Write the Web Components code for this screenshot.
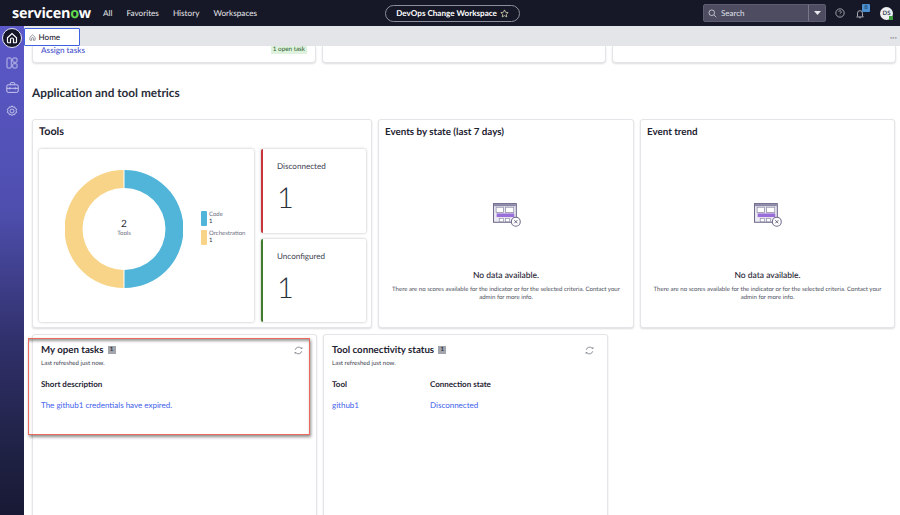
<!DOCTYPE html>
<html><head><meta charset="utf-8">
<style>
html,body{margin:0;padding:0;height:100%;overflow:hidden;background:#fff;font-family:Lato,"Open Sans",sans-serif;text-rendering:geometricPrecision;}
sn-app{display:block;width:900px;height:515px;}
</style></head>
<body>
<sn-app></sn-app>
<script>
function def(name,css,html){
  customElements.define(name,class extends HTMLElement{
    constructor(){super();this.attachShadow({mode:'open'}).innerHTML='<style>'+css+'</style>'+html;}
  });
}
def('sn-card',`:host{display:block;position:relative;box-sizing:border-box;background:#fff;border:1px solid #e4e5e8;border-radius:3px;box-shadow:0 1px 2px rgba(0,0,0,.14);min-width:0}`,`<slot></slot>`);

def('sn-topbar',`
:host{display:flex;align-items:center;height:26px;flex:none;background:#171827;color:#fff;position:relative;z-index:2}
.logo{font:700 14.4px "Open Sans",sans-serif;letter-spacing:-.25px;margin-left:12px;width:83px;color:#fff;white-space:nowrap}
.logo b{color:#62d84e;font-weight:700}
nav{display:flex;gap:14px;margin-left:8px;font-size:8.2px;color:#e6e7ec}
.pill{margin-left:128px;width:135px;height:17px;border:1px solid #8c8e99;border-radius:9px;display:flex;align-items:center;justify-content:center;gap:3px;font-weight:700;font-size:8.1px;white-space:nowrap;box-sizing:border-box}
.right{margin-left:auto;display:flex;align-items:center}
.search{width:123px;height:18px;background:#4d4c61;border:1px solid #5d5c70;border-radius:2px;display:flex;align-items:center;color:#dfe0e6;font-size:8px;box-sizing:border-box;padding-left:4px;gap:4px;margin-right:9px}
.search span{flex:1}
.drop{width:16px;height:100%;border-left:1px solid #77778a;display:flex;align-items:center;justify-content:center}
.ico{width:10px;height:10px;display:block}
.bell{position:relative;margin-left:8px;width:14px;height:14px}
.badge{position:absolute;left:9px;top:-2px;width:8px;height:8px;background:#4b8fd0;color:#173a5c;font-size:6px;line-height:8px;text-align:center;border-radius:1px}
.av{width:13px;height:13px;border-radius:50%;background:#eef0f2;color:#3a3f52;font-size:6px;font-weight:700;display:flex;align-items:center;justify-content:center;margin:0 7px 0 13px;position:relative}
.av i{position:absolute;right:0;bottom:0;width:4px;height:4px;background:#3d9a3d}
`,`
<div class="logo">servicen<b>o</b>w</div>
<nav><span>All</span><span>Favorites</span><span>History</span><span>Workspaces</span></nav>
<div class="pill"><span>DevOps Change Workspace</span>
<svg width="9" height="9" viewBox="0 0 24 24" fill="none" stroke="#e0dcc0" stroke-width="2"><path d="M12 2.5l2.9 6.3 6.9.8-5.1 4.7 1.4 6.8-6.1-3.4-6.1 3.4 1.4-6.8L2.2 9.6l6.9-.8z"/></svg></div>
<div class="right">
<div class="search"><svg width="9" height="9" viewBox="0 0 24 24" fill="none" stroke="#dfe0e6" stroke-width="2"><circle cx="10" cy="10" r="7.5"/><path d="M16 16l6 6"/></svg><span>Search</span><div class="drop"><svg width="7" height="4" viewBox="0 0 7 4"><path d="M0 0h7L3.5 4z" fill="#e8e8ee"/></svg></div></div>
<svg class="ico" viewBox="0 0 24 24" fill="none" stroke="#b8b9c2" stroke-width="2"><circle cx="12" cy="12" r="10"/><path d="M9 9.500a3 3 0 1 1 4.500 2.600c-1 .6-1.500 1.200-1.500 2.400M12 17v1"/></svg>
<div class="bell"><svg width="10" height="10" viewBox="0 0 24 24" fill="none" stroke="#b8b9c2" stroke-width="2.2" style="position:absolute;left:2px;top:3px"><path d="M6 17V10a6 6 0 0 1 12 0v7l2 2H4zM10 21h4"/></svg><div class="badge">8</div></div>
<div class="av">DS<i></i></div>
</div>`);

def('sn-sidebar',`
:host{display:flex;flex-direction:column;align-items:center;width:24px;flex:none;background:linear-gradient(#5b58c8 0,#4e4eae 35%,#30306b 60%,#202245 80%,#13142a 100%);}
.home{width:20px;height:20px;border-radius:50%;background:#15162a;border:1px solid #e8e8f4;box-sizing:border-box;display:flex;align-items:center;justify-content:center;margin-top:2px;flex:none}
svg{display:block;flex:none}
`,`
<div class="home"><svg width="12" height="12" viewBox="0 0 24 24" fill="none" stroke="#fff" stroke-width="2.4"><path d="M3 11.500L12 3l9 8.500V20a1.500 1.500 0 0 1-1.500 1.500H15V15a3 3 0 0 0-6 0v6.500H4.500A1.500 1.500 0 0 1 3 20z"/></svg></div>
<svg style="margin-top:8.5px" width="12" height="12" viewBox="0 0 24 24" fill="none" stroke="#c9c9ee" stroke-width="1.8"><rect x="2" y="2" width="8.5" height="20" rx="1.5"/><rect x="13.5" y="2" width="8.5" height="8.5" rx="1.5"/><rect x="13.5" y="13.5" width="8.5" height="8.5" rx="1.5"/></svg>
<svg style="margin-top:12.5px" width="13" height="13" viewBox="0 0 24 24" fill="none" stroke="#c9c9ee" stroke-width="1.8"><rect x="1.5" y="7" width="21" height="14" rx="2.5"/><path d="M8 7V4.500A1.500 1.500 0 0 1 9.500 3h5A1.500 1.500 0 0 1 16 4.500V7M1.500 13.500h21M7 11.500v4M17 11.500v4"/></svg>
<svg style="margin-top:11px" width="12" height="12" viewBox="0 0 24 24" fill="none" stroke="#c9c9ee" stroke-width="1.8"><circle cx="12" cy="12" r="4"/><path d="M12 1.500l2 3 3.400-.9.900 3.400 3.200 1.300-1.500 3.200 1.500 3.200-3.200 1.300-.9 3.400-3.400-.9-2 3-2-3-3.400.9-.9-3.400-3.200-1.300L3.900 11.500 2.400 8.300l3.200-1.300.9-3.400 3.500.9z"/></svg>
`);

def('sn-tabs',`
:host{display:flex;align-items:flex-end;height:20px;background:#e3e5e8;flex:none;position:relative}
.tab{width:56px;height:18px;background:#fff;border:1px solid #3f63e0;border-radius:1px;box-sizing:border-box;display:flex;align-items:center;gap:2.5px;padding-left:4px;font-size:8.1px;color:#1f2433;white-space:nowrap;font-weight:500}
.more{margin:0 3px 5px auto;color:#6a6e7a;font-size:3.5px;line-height:6px;letter-spacing:.3px}
`,`<div class="tab"><svg width="7" height="7" viewBox="0 0 24 24" fill="none" stroke="#5a5e6b" stroke-width="2.2"><path d="M3 11.500L12 3l9 8.500V20a1.500 1.500 0 0 1-1.500 1.500H15V15a3 3 0 0 0-6 0v6.500H4.500A1.500 1.500 0 0 1 3 20z"/></svg><span>Home</span></div><div class="more">•••</div>`);

def('sn-donut',`
:host{display:flex;align-items:flex-start;box-sizing:border-box;background:#fff;border-radius:2px;box-shadow:0 0 3px rgba(0,0,0,.28);padding:21px 0 0 26px;min-width:0}
.ring{position:relative;width:118px;height:118px;flex:none}
.ring svg{display:block}
.c{position:absolute;inset:0 0 3px 0;display:flex;flex-direction:column;align-items:center;justify-content:center;color:#1f2433;font-size:10px;line-height:12px}
.c small{font-size:6px;color:#6c7080;line-height:7.2px}
.leg{margin:40.5px 0 0 18px;font-size:6px;line-height:7.5px;color:#6c7080;display:flex;flex-direction:column;gap:4px}
.li{display:flex;gap:2px;align-items:center}
.sw{width:6px;height:15px;border-radius:1px}
b{display:block;font-weight:400;color:#2a2e3b}
`,`<div class="ring"><svg width="118" height="118" viewBox="0 0 118 118"><path d="M59.500 0a59 59 0 0 1 0 118v-18a41 41 0 0 0 0-82z" fill="#50b5d8"/><path d="M58.500 0a59 59 0 0 0 0 118v-18a41 41 0 0 1 0-82z" fill="#f8d488"/></svg><div class="c"><span>2</span><small>Tools</small></div></div>
<div class="leg"><div class="li"><div class="sw" style="background:#50b5d8"></div><div>Code<b>1</b></div></div><div class="li"><div class="sw" style="background:#f8d488"></div><div>Orchestration<b>1</b></div></div></div>`);

def('sn-stat',`
:host{display:block;box-sizing:border-box;background:#fff;border-radius:2px;box-shadow:0 0 3px rgba(0,0,0,.28);border-left:2px solid var(--c);padding:10px 0 0 14px;min-height:0}
.l{font-size:8.1px;line-height:14px;color:#3d4150}
.n{font-size:29px;font-weight:300;line-height:30px;margin-top:10px;color:#2a2e3b}
`,`<div class="l"><slot name="l"></slot></div><div class="n"><slot name="n"></slot></div>`);

def('sn-nodata',`
:host{display:flex;flex-direction:column;align-items:center;text-align:center;padding-top:83px}
svg{display:block}
h4{margin:42px 0 0;font-size:8.5px;line-height:12px;font-weight:500;color:#1f2433}
p{margin:5px 6px 0;font-size:6.05px;line-height:8px;color:#4d5160}
`,`<svg width="28" height="24" viewBox="0 0 27 23" style="margin-left:1px"><rect x=".5" y=".5" width="22" height="18" fill="#eceaf2" stroke="#6d6a8a"/><path d="M1 1h21v2H1z" fill="#8a86a8"/><rect x="3" y="4" width="7" height="5" fill="#fff" stroke="#8a87a3" stroke-width=".7"/><rect x="12" y="4" width="8" height="5" fill="#fff" stroke="#8a87a3" stroke-width=".7"/><rect x="3.5" y="10" width="17" height="3.5" fill="#9a6ed8"/><rect x="6" y="15" width="4" height="3" fill="#fff" stroke="#8a87a3" stroke-width=".6"/><rect x="12" y="15" width="4" height="3" fill="#fff" stroke="#8a87a3" stroke-width=".6"/><circle cx="22" cy="18" r="4.3" fill="#fff" stroke="#6d6a8a"/><path d="M20.500 16.500l3 3m0-3l-3 3" stroke="#4d4a6a" stroke-width=".8"/></svg><h4>No data available.</h4><p>There are no scores available for the indicator or for the selected criteria. Contact your admin for more info.</p>`);

def('sn-table',`
:host{display:block;height:100%;box-sizing:border-box;padding:8px 8px 0 8px;position:relative}
.h{display:flex;align-items:center;gap:4px;font-size:9.7px;font-weight:700;line-height:14px;color:#1f2433}
.ct{background:#a3a5ad;color:#2a2e3b;font-size:6px;font-weight:700;width:8px;height:8px;line-height:8px;text-align:center;margin-top:-1px}
.s{font-size:6.1px;line-height:8px;color:#3d4150;margin-top:3px}
.r{position:absolute;right:13px;top:11px}
.g{margin-top:10px;display:grid;grid-template-columns:var(--cols,1fr);font-size:8px;row-gap:8px;line-height:13px}
::slotted(b){font-weight:700;color:#1f2433}
`,`<div class="h"><slot name="t"></slot><span class="ct">1</span></div><div class="s">Last refreshed just now.</div>
<svg class="r" width="9" height="9" viewBox="0 0 24 24" fill="none" stroke="#6a6e7a" stroke-width="2"><path d="M3.500 10A9 9 0 0 1 19 6l2 2M20.500 14A9 9 0 0 1 5 18l-2-2"/><path d="M21 3v5M3 21v-5"/></svg>
<div class="g"><slot></slot></div>`);

def('sn-app',`
:host{display:flex;flex-direction:column;height:515px;width:900px;overflow:hidden}
.body{display:flex;flex:1;min-height:0}
.main{flex:1;min-width:0;display:flex;flex-direction:column}
.content{flex:1;min-height:0;padding:0 5px 0 8px;position:relative}
.r1{display:grid;grid-template-columns:284px 284px 284px;gap:6px;height:17px}
.r1 sn-card{border-top:none;border-radius:0 0 4px 4px;padding:0 8px;display:flex}
.top{display:flex;justify-content:space-between;align-items:flex-start;flex:1;line-height:10px;margin-top:-1.5px}
a{color:#4450cc;text-decoration:none;font-size:8.2px;font-weight:500}
.pill{background:#dff2dd;color:#2d5f32;font-size:6.3px;line-height:8px;padding:0 2px;margin-top:1.5px}
h2{margin:0;font-size:11.8px;line-height:18px;font-weight:700;color:#2a2e3b;padding:21px 0 17px}
.r2{display:grid;grid-template-columns:340px 256px 255px;gap:6px;height:209px}
h3{margin:0;font-size:9.8px;line-height:14px;font-weight:700;color:#1f2433}
h3.big{font-size:10.8px}
.pad{padding:5px 0 0 6px;box-sizing:border-box}
.tools{display:grid;grid-template-columns:215px 105px;grid-template-rows:84px 83px;gap:6px 7px;margin-top:10px}
.don{grid-row:1/3}
.r3{display:grid;grid-template-columns:285px 285px;gap:6px;margin-top:6px;height:220px}
.hl{position:absolute;left:-5px;top:3px;width:282px;height:97px;box-sizing:border-box;border:1px solid #ec6a5c;box-shadow:1px 2px 3px rgba(0,0,0,.45),inset 0 3px 3px -1px rgba(0,0,0,.4);pointer-events:none}
a.t{color:#3f63ea;font-weight:400;font-size:8px}
`,`
<sn-topbar></sn-topbar>
<div class="body"><sn-sidebar></sn-sidebar>
<div class="main"><sn-tabs></sn-tabs>
<div class="content">
<div class="r1">
<sn-card><div class="top"><a href="#">Assign tasks</a><span class="pill">1 open task</span></div></sn-card>
<sn-card></sn-card><sn-card></sn-card>
</div>
<h2>Application and tool metrics</h2>
<div class="r2">
<sn-card><div class="pad"><h3 class="big">Tools</h3><div class="tools"><sn-donut class="don"></sn-donut>
<sn-stat style="--c:#c8353f"><span slot="l">Disconnected</span><span slot="n">1</span></sn-stat>
<sn-stat style="--c:#3f7d2c"><span slot="l">Unconfigured</span><span slot="n">1</span></sn-stat></div></div></sn-card>
<sn-card><sn-nodata style="position:absolute;inset:0"></sn-nodata><div class="pad" style="position:relative"><h3>Events by state (last 7 days)</h3></div></sn-card>
<sn-card><sn-nodata style="position:absolute;inset:0"></sn-nodata><div class="pad" style="position:relative"><h3>Event trend</h3></div></sn-card>
</div>
<div class="r3">
<sn-card><sn-table><span slot="t">My open tasks</span><b>Short description</b><a class="t" href="#">The github1 credentials have expired.</a></sn-table><div class="hl"></div></sn-card>
<sn-card><sn-table style="--cols:98px 1fr"><span slot="t">Tool connectivity status</span><b>Tool</b><b>Connection state</b><a class="t" href="#">github1</a><a class="t" href="#">Disconnected</a></sn-table></sn-card>
</div>
</div></div></div>`);
</script>
</body></html>
